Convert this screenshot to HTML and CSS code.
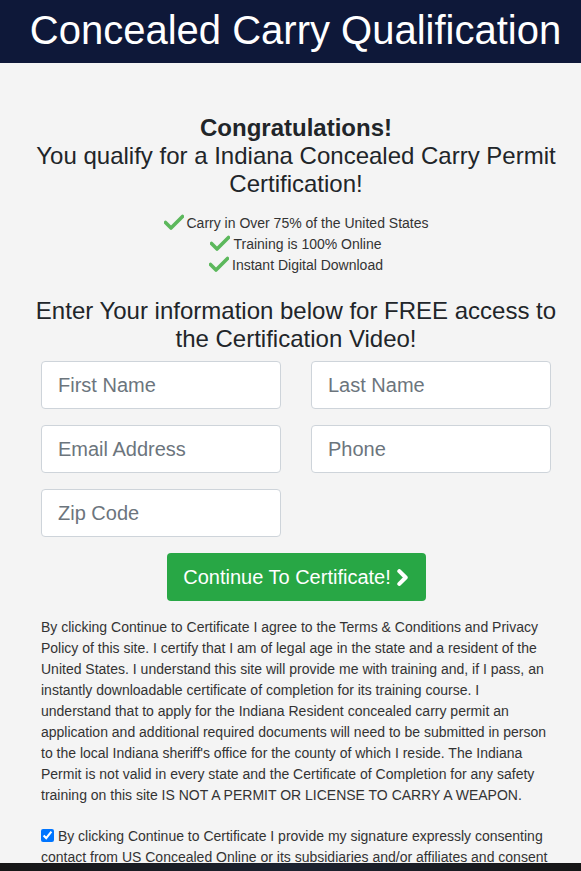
FILE: index.html
```html
<!DOCTYPE html>
<html>
<head>
<meta charset="utf-8">
<link rel="stylesheet" href="styles.css">
</head>
<body>
<header class="topbar">
  <h1 class="title">Concealed Carry Qualification</h1>
</header>
<main class="content">
  <section class="intro">
    <h2 class="congrats"><strong>Congratulations!</strong><br>You qualify for a Indiana Concealed Carry Permit Certification!</h2>
    <ul class="checks">
      <li><svg class="tick" viewBox="0 0 20 16"><path d="M1.5 8.5 L7 14 L18.5 2.5" fill="none" stroke="#5cb85c" stroke-width="3.6" stroke-linecap="round" stroke-linejoin="round"/></svg>Carry in Over 75% of the United States</li>
      <li><svg class="tick" viewBox="0 0 20 16"><path d="M1.5 8.5 L7 14 L18.5 2.5" fill="none" stroke="#5cb85c" stroke-width="3.6" stroke-linecap="round" stroke-linejoin="round"/></svg>Training is 100% Online</li>
      <li><svg class="tick" viewBox="0 0 20 16"><path d="M1.5 8.5 L7 14 L18.5 2.5" fill="none" stroke="#5cb85c" stroke-width="3.6" stroke-linecap="round" stroke-linejoin="round"/></svg>Instant Digital Download</li>
    </ul>
    <h2 class="enter">Enter Your information below for FREE access to the Certification Video!</h2>
  </section>
  <form class="form">
    <div class="grid">
      <input class="field" type="text" placeholder="First Name">
      <input class="field" type="text" placeholder="Last Name">
      <input class="field" type="text" placeholder="Email Address">
      <input class="field" type="text" placeholder="Phone">
      <input class="field" type="text" placeholder="Zip Code">
    </div>
    <div class="btnrow">
      <button type="button" class="btn">Continue To Certificate! <svg class="chev" viewBox="0 0 12 16"><path d="M3 2 L9 8 L3 14" fill="none" stroke="#fff" stroke-width="3.8" stroke-linecap="round" stroke-linejoin="round"/></svg></button>
    </div>
    <p class="legal">By clicking Continue to Certificate I agree to the Terms &amp; Conditions and Privacy Policy of this site. I certify that I am of legal age in the state and a resident of the United States. I understand this site will provide me with training and, if I pass, an instantly downloadable certificate of completion for its training course. I understand that to apply for the Indiana Resident concealed carry permit an application and additional required documents will need to be submitted in person to the local Indiana sheriff's office for the county of which I reside. The Indiana Permit is not valid in every state and the Certificate of Completion for any safety training on this site IS NOT A PERMIT OR LICENSE TO CARRY A WEAPON.</p>
    <p class="legal consent"><input type="checkbox" class="cb" checked> By clicking Continue to Certificate I provide my signature expressly consenting contact from US Concealed Online or its subsidiaries and/or affiliates and consent to receive marketing communications by phone, text and email.</p>
  </form>
</main>
<div class="bottombar"></div>
</body>
</html>
```
FILE: styles.css
```css
html, body {
  margin: 0;
  padding: 0;
}
body {
  background: #f4f4f4;
  font-family: "Liberation Sans", Arial, sans-serif;
  color: #212529;
}
.topbar {
  background: #0e1839;
  height: 63px;
  display: flex;
  align-items: center;
  justify-content: center;
  padding-left: 10px;
}
.title {
  margin: 0;
  color: #fff;
  font-weight: normal;
  font-size: 40px;
  line-height: 1;
  position: relative;
  top: -2px;
}
.content {
  padding: 51px 30px 40px 41px;
}
.intro {
  text-align: center;
  margin: 0 -15px;
}
.congrats {
  margin: 0;
  font-size: 24px;
  font-weight: normal;
  line-height: 28px;
}
.congrats strong {
  font-weight: bold;
}
.checks {
  list-style: none;
  margin: 15px 0 0;
  padding: 0;
  font-size: 14px;
  line-height: 21px;
  color: #333;
}
.checks li {
  display: flex;
  justify-content: center;
  align-items: center;
}
.tick {
  width: 20px;
  height: 16px;
  margin-right: 3px;
  position: relative;
  top: -2px;
}
.enter {
  margin: 21px 0 0;
  font-size: 24px;
  font-weight: normal;
  line-height: 28px;
}
.form {
  margin-top: 8px;
}
.grid {
  display: grid;
  grid-template-columns: 240px 240px;
  column-gap: 30px;
  row-gap: 16px;
}
.field {
  box-sizing: border-box;
  height: 48px;
  width: 100%;
  border: 1px solid #ced4da;
  border-radius: 4px;
  background: #fff;
  padding: 0 16px;
  font-family: "Liberation Sans", Arial, sans-serif;
  font-size: 20px;
  color: #495057;
}
.field::placeholder {
  color: #6c757d;
}
.btnrow {
  display: flex;
  justify-content: center;
  margin-top: 16px;
}
.btn {
  background: #28a745;
  color: #fff;
  border: none;
  border-radius: 4px;
  height: 48px;
  width: 259px;
  font-family: "Liberation Sans", Arial, sans-serif;
  font-size: 20px;
  display: flex;
  align-items: center;
  justify-content: center;
  gap: 5px;
  padding: 0;
}
.chev {
  width: 13px;
  height: 17px;
}
.legal {
  margin: 16px 0 0;
  font-size: 14px;
  line-height: 21px;
  color: #333;
  width: 510px;
}
.consent {
  margin-top: 20px;
}
.cb {
  margin: 0;
  width: 13px;
  height: 13px;
  vertical-align: -1px;
}
.bottombar {
  position: fixed;
  left: 0;
  right: 0;
  bottom: 0;
  height: 8px;
  background: linear-gradient(90deg, #161616 0%, #1c2230 50%, #161616 100%);
}
```
